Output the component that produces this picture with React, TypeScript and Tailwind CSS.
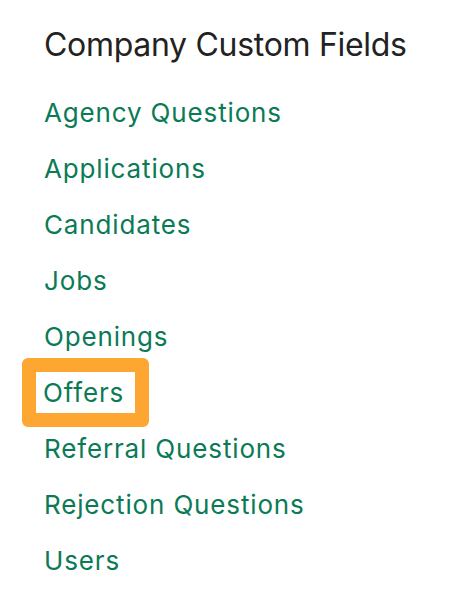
const links = [
  'Agency Questions',
  'Applications',
  'Candidates',
  'Jobs',
  'Openings',
  'Offers',
  'Referral Questions',
  'Rejection Questions',
  'Users',
];

export default function App() {
  return (
    <div className="w-[465px] h-[614px] bg-white pl-[44px] pt-[26px]" style={{ fontFamily: 'Inter, "Liberation Sans", sans-serif' }}>
      <h2 className="text-[32px] leading-[38px] text-[#222222] tracking-[-0.3px]">Company Custom Fields</h2>
      <ul className="mt-[20px] flex flex-col">
        {links.map((l) =>
          l === 'Offers' ? (
            <li key={l} className="h-[56px] flex items-center -ml-[22px]">
              <span className="border-[14px] border-[#fda632] rounded-[6px] pl-[7px] w-[127px] h-[69px] flex items-center text-[26px] tracking-[0.85px] text-[#0b7a56]">
                {l}
              </span>
            </li>
          ) : (
            <li key={l} className="h-[56px] flex items-center text-[26px] tracking-[0.85px] text-[#0b7a56]">
              {l}
            </li>
          )
        )}
      </ul>
    </div>
  );
}
